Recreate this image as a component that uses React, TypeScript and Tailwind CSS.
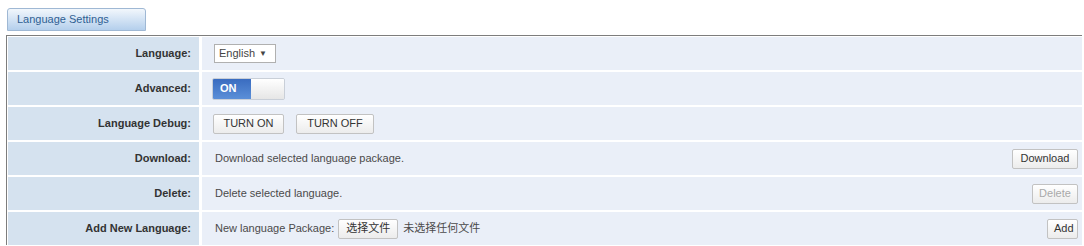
import React from 'react';

const font = { fontFamily: '"Liberation Sans", Arial, "Noto Sans CJK SC", sans-serif' };

function Btn({ children, disabled, className = '' }: { children: React.ReactNode; disabled?: boolean; className?: string }) {
  return (
    <button
      className={`h-[20px] px-[6px] border border-[#c2c2c2] rounded-[2px] bg-gradient-to-b from-[#ffffff] to-[#ececec] text-[11px] leading-none ${
        disabled ? 'text-[#a9a9a9]' : 'text-[#333]'
      } ${className}`}
    >
      {children}
    </button>
  );
}

export default function App() {
  const rows: { label: string; body: React.ReactNode; right?: React.ReactNode }[] = [
    {
      label: 'Language:',
      body: (
        <div className="ml-[12px] h-[19px] w-[62px] border border-[#b0b0b0] bg-white flex items-center px-[4px] text-[11px] text-[#444]">
          English <span className="ml-[4px] text-[8px]">▼</span>
        </div>
      ),
    },
    {
      label: 'Advanced:',
      body: (
        <div className="ml-[10px] flex h-[22px] w-[73px] rounded-[2px] overflow-hidden border border-[#c9cfd8]">
          <div className="w-[38px] bg-gradient-to-b from-[#3a6cc0] to-[#5b8fd8] text-white text-[11px] font-bold flex items-center pl-[7px]">
            ON
          </div>
          <div className="flex-1 bg-gradient-to-b from-[#ffffff] to-[#e6e6e6]" />
        </div>
      ),
    },
    {
      label: 'Language Debug:',
      body: (
        <div className="ml-[11px] flex gap-[12px]">
          <Btn className="w-[71px]">TURN ON</Btn>
          <Btn className="w-[78px]">TURN OFF</Btn>
        </div>
      ),
    },
    {
      label: 'Download:',
      body: <span className="ml-[13px]">Download selected language package.</span>,
      right: <Btn className="w-[66px]">Download</Btn>,
    },
    {
      label: 'Delete:',
      body: <span className="ml-[13px]">Delete selected language.</span>,
      right: <Btn disabled className="w-[46px]">Delete</Btn>,
    },
    {
      label: 'Add New Language:',
      body: (
        <div className="ml-[13px] flex items-center">
          <span>New language Package:</span>
          <Btn className="ml-[4px] w-[60px]">选择文件</Btn>
          <span className="ml-[5px]">未选择任何文件</span>
        </div>
      ),
      right: <Btn className="w-[31px]">Add</Btn>,
    },
  ];

  return (
    <div className="w-[1084px] h-[246px] bg-white overflow-hidden" style={font}>
      <div className="pt-[8px] pl-[7px]">
        <div className="w-[139px] h-[23px] rounded-t-[3px] border border-[#9fb8d4] bg-gradient-to-b from-[#f2f7fc] to-[#b4cfec] flex items-center pl-[9px] text-[11px] text-[#2f5f93]">
          Language Settings
        </div>
      </div>
      <div className="mt-[4px] ml-[6px] w-[1076px] border-l border-t border-[#7d7d7d] flex flex-col gap-[2px] pt-[1px] pl-[1px]">
        {rows.map((r) => (
          <div key={r.label} className="flex h-[33px] gap-[3px]">
            <div className="w-[191px] bg-[#d5e2ef] flex items-center justify-end pr-[8px] text-[11px] font-bold text-[#333]">
              {r.label}
            </div>
            <div className="flex-1 bg-[#eaeff8] flex items-center justify-between pr-[4px] text-[11px] text-[#4a4a4a]">
              {r.body}
              {r.right}
            </div>
          </div>
        ))}
      </div>
    </div>
  );
}
